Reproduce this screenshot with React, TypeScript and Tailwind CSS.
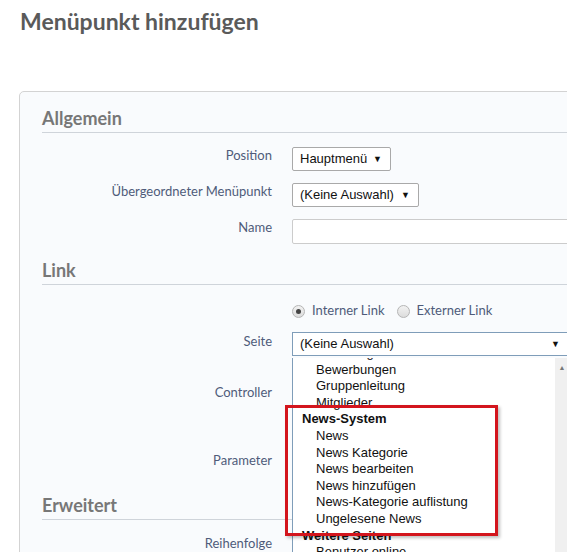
import React from 'react';

type Option = { label: string; group?: boolean };

const pageOptions: Option[] = [
  { label: 'Einladung' },
  { label: 'Bewerbungen' },
  { label: 'Gruppenleitung' },
  { label: 'Mitglieder' },
  { label: 'News-System', group: true },
  { label: 'News' },
  { label: 'News Kategorie' },
  { label: 'News bearbeiten' },
  { label: 'News hinzufügen' },
  { label: 'News-Kategorie auflistung' },
  { label: 'Ungelesene News' },
  { label: 'Weitere Seiten', group: true },
  { label: 'Benutzer online' },
];

function SectionHeading({ title, className = '' }: { title: string; className?: string }) {
  return (
    <div className={`pt-[15px] pb-[3px] border-b border-[#cfd4da] mr-[-40px] ${className}`}>
      <h2 className="text-[18px] leading-[22px] font-bold text-[#777]">{title}</h2>
    </div>
  );
}

function Row({
  label,
  children,
  labelPad = 'pt-0',
}: {
  label?: string;
  children?: React.ReactNode;
  labelPad?: string;
}) {
  return (
    <div className="flex items-start">
      <label className={`w-[250px] shrink-0 pr-5 text-right text-[13px] leading-[16px] text-[#4f5b7a] ${labelPad}`}>
        {label}
      </label>
      <div className="flex-1">{children}</div>
    </div>
  );
}

function Select({ value, width }: { value: string; width: string }) {
  return (
    <div
      className={`${width} h-6 flex items-center justify-between bg-white border border-[#a9a9a9] rounded-[2px] pl-[7px] pr-[8px] font-['Liberation_Sans',Arial,sans-serif] text-[13px] text-[#111]`}
    >
      <span>{value}</span>
      <span className="text-[9px] leading-none">▼</span>
    </div>
  );
}

function Radio({ checked, label }: { checked?: boolean; label: string }) {
  return (
    <span className="flex items-center gap-[7px]">
      <span className="w-[13px] h-[13px] rounded-full border border-[#b5b5b5] bg-gradient-to-b from-[#f2f2f2] to-[#dcdcdc] flex items-center justify-center">
        {checked && <span className="w-[5px] h-[5px] rounded-full bg-[#444]" />}
      </span>
      <span className="text-[13px] text-[#4f5b7a]">{label}</span>
    </span>
  );
}

function PageDropdown() {
  return (
    <div className="absolute left-0 top-[26px] w-[290px] h-[220px] bg-white border-l border-[#7f9db9] overflow-hidden flex">
      <ul className="flex-1 mt-[-13px] font-['Liberation_Sans',Arial,sans-serif] text-[13px] leading-[16.6px] text-[#111]">
        {pageOptions.map((o) => (
          <li key={o.label} className={o.group ? 'pl-[9px] font-bold' : 'pl-[23px]'}>
            {o.label}
          </li>
        ))}
      </ul>
      <div className="w-[14px] mr-[13px] bg-[#f0f0f0] flex justify-center pt-[6px]">
        <span className="text-[7px] leading-none text-[#777]">▲</span>
      </div>
    </div>
  );
}

export default function App() {
  return (
    <div className="relative w-[567px] h-[552px] overflow-hidden bg-white font-[Lato,'Open_Sans',sans-serif]">
      <h1 className="pl-5 pt-[6px] text-[23px] leading-[30px] font-bold text-[#5a5a5a]">Menüpunkt hinzufügen</h1>

      <div className="mt-[55px] ml-[19px] w-[600px] h-[500px] border border-[#d3d3d3] rounded-tl-[5px] bg-[#f9fbfd] pl-[22px]">
        <SectionHeading title="Allgemein" />
        <div className="mt-[14px] flex flex-col gap-3">
          <Row label="Position">
            <Select value="Hauptmenü" width="w-[99px]" />
          </Row>
          <Row label="Übergeordneter Menüpunkt">
            <Select value="(Keine Auswahl)" width="w-[127px]" />
          </Row>
          <Row label="Name">
            <div className="h-[25px] w-[300px] bg-white border border-[#ccc] rounded-[2px]" />
          </Row>
        </div>

        <SectionHeading title="Link" />
        <div className="mt-[17px] flex flex-col">
          <Row>
            <div className="h-[18px] flex items-center gap-[12px]">
              <Radio checked label="Interner Link" />
              <Radio label="Externer Link" />
            </div>
          </Row>
          <div className="mt-3">
            <Row label="Seite" labelPad="pt-[1px]">
              <div className="relative z-10">
                <div className="w-[290px] h-6 flex items-center bg-white border border-[#7f9db9] pl-[7px] font-['Liberation_Sans',Arial,sans-serif] text-[13px] text-[#111]">
                  <span className="flex-1">(Keine Auswahl)</span>
                  <span className="text-[9px] leading-none mr-[21px]">▼</span>
                </div>
                <PageDropdown />
              </div>
            </Row>
          </div>
          <div className="mt-3">
            <Row label="Controller" labelPad="pt-[16px]">
              <div className="h-[72px]" />
            </Row>
          </div>
          <div className="mt-3">
            <Row label="Parameter">
              <div className="h-6" />
            </Row>
          </div>
        </div>

        <SectionHeading title="Erweitert" className="mt-[3px]" />
        <div className="mt-[15px]">
          <Row label="Reihenfolge">
            <div className="h-6" />
          </Row>
        </div>
      </div>

      {/* highlight frame around the news entries */}
      <div className="absolute left-[285px] top-[405px] w-[213px] h-[131px] border-[3px] border-[#d3151d] shadow-[2px_2px_3px_rgba(0,0,0,0.25)] z-20 pointer-events-none" />
    </div>
  );
}
